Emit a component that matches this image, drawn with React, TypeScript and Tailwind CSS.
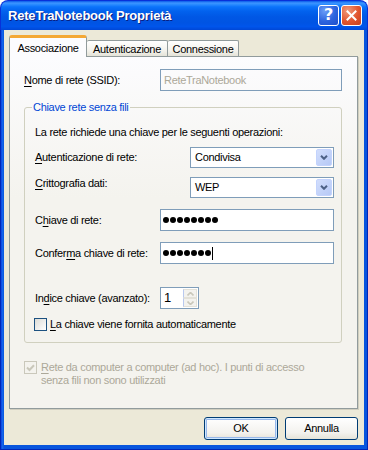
import React from "react";

function U({ children }: { children: React.ReactNode }) {
  return <span className="underline underline-offset-[2px] decoration-[1px]">{children}</span>;
}

function Chevron({ color = "#4D6185" }: { color?: string }) {
  return (
    <svg width="8" height="5" viewBox="0 0 8 5">
      <path d="M1 0.8 L4 3.8 L7 0.8" stroke={color} strokeWidth="2" fill="none" />
    </svg>
  );
}

function Select({ value }: { value: string }) {
  return (
    <div className="w-[144px] h-[21px] border border-[#7F9DB9] bg-white flex items-center pl-[4px] pr-px">
      <span className="flex-1 leading-[13px] text-black">{value}</span>
      <div className="w-[16px] h-[17px] rounded-[2px] border border-[#C3D3FD] bg-[linear-gradient(135deg,#D2DEFC,#B6C9F6)] flex items-center justify-center">
        <Chevron />
      </div>
    </div>
  );
}

function Dots({ n, caret }: { n: number; caret?: boolean }) {
  return (
    <div className="flex items-center gap-[1px]">
      {Array.from({ length: n }).map((_, i) => (
        <span key={i} className="w-[6px] h-[6px] rounded-full bg-black inline-block" />
      ))}
      {caret && <span className="w-px h-[13px] bg-black inline-block" />}
    </div>
  );
}

function Input({ w, children }: { w: string; children: React.ReactNode }) {
  return (
    <div className={`${w} h-[22px] border border-[#7F9DB9] bg-white flex items-center pl-[2px]`}>
      {children}
    </div>
  );
}

export default function App() {
  return (
    <div className="w-[368px] h-[450px] flex flex-col font-['Liberation_Sans',sans-serif] text-[11px] tracking-[-0.3px] text-black select-none">
      {/* Title bar */}
      <div className="h-[30px] rounded-t-[8px] flex items-center pl-[7px] pr-[5px] bg-[linear-gradient(to_bottom,#0A5AEA_0%,#3D95FF_7%,#2A8BFF_12%,#0C74FB_20%,#0262EE_35%,#0057E5_55%,#0054E3_75%,#0055EB_88%,#0047D6_100%)] border-t border-x border-[#0831D9]">
        <span className="text-white font-bold text-[13px] tracking-[-0.2px] [text-shadow:1px_1px_0_#0A1E80]">
          ReteTraNotebook Proprietà
        </span>
        <div className="ml-auto flex gap-[2px] pb-[1px]">
          <div className="w-[21px] h-[21px] rounded-[3px] border border-white bg-[radial-gradient(circle_at_30%_25%,#6A9EF8,#2C63DE_55%,#1E4FCB)] flex items-center justify-center">
            <span className="text-white font-bold text-[16px] leading-none font-['DejaVu_Sans',sans-serif]">?</span>
          </div>
          <div className="w-[21px] h-[21px] rounded-[3px] border border-white bg-[radial-gradient(circle_at_30%_25%,#F09A7C,#E1552F_55%,#C7401F)] flex items-center justify-center">
            <svg width="11" height="11" viewBox="0 0 11 11">
              <path d="M1.5 1.5 L9.5 9.5 M9.5 1.5 L1.5 9.5" stroke="white" strokeWidth="2" strokeLinecap="square" />
            </svg>
          </div>
        </div>
      </div>

      {/* Frame */}
      <div className="flex-1 flex bg-[linear-gradient(to_right,#0831D9,#166AEE_1px,#0855DD_3px,#0855DD)] px-[4px] pb-[4px] border-x border-b border-[#0027B8]">
        <div className="flex-1 bg-[#ECE9D8] flex flex-col -mx-px">
          {/* Tabs */}
          <div className="mt-[5px] h-[22px] flex items-end pl-[5px]">
            <div className="relative z-10 w-[78px] h-[22px] flex items-center justify-center bg-[#FCFCFE] border-x border-[#919B9C] rounded-t-[3px] border-t-[3px] border-t-[#F4A834] pt-[1px]">
              Associazione
            </div>
            <div className="w-[81px] h-[17px] flex items-center justify-center pt-px bg-[linear-gradient(to_bottom,#FFFFFF,#F3F2EC_60%,#E2E0D4)] border-t border-r border-[#919B9C] rounded-t-[2px]">
              Autenticazione
            </div>
            <div className="w-[71px] h-[17px] flex items-center justify-center pt-px bg-[linear-gradient(to_bottom,#FFFFFF,#F3F2EC_60%,#E2E0D4)] border-t border-r border-[#919B9C] rounded-t-[2px]">
              Connessione
            </div>
          </div>

          {/* Panel */}
          <div className="ml-[5px] w-[349px] h-[353px] -mt-px border border-[#919B9C] bg-[linear-gradient(to_bottom,#FCFCFE,#F4F3EE_40%,#F4F3EE)] shadow-[1px_1px_0_#D0CEBF] flex flex-col pl-[14px]">
            {/* Nome di rete */}
            <div className="mt-[12px] flex items-center">
              <span className="w-[136px] leading-[13px]">
                <U>N</U>ome di rete (SSID):
              </span>
              <div className="w-[182px] h-[22px] border border-[#7F9DB9] flex items-center pl-[3px] text-[#ACA899]">
                ReteTraNotebook
              </div>
            </div>

            {/* Group */}
            <fieldset className="mt-[10px] w-[318px] border border-[#D0D0BF] rounded-[3px] pl-[10px] pb-[11px]">
              <legend className="-ml-[3px] px-[1px] leading-[13px] text-[#0046D5]">Chiave rete senza fili</legend>
              <div className="mt-[12px] leading-[13px]">La rete richiede una chiave per le seguenti operazioni:</div>

              <div className="mt-[8px] flex items-start">
                <span className="w-[155px] mt-[4px] leading-[13px]">
                  <U>A</U>utenticazione di rete:
                </span>
                <Select value="Condivisa" />
              </div>

              <div className="mt-[9px] flex items-start">
                <span className="w-[155px] mt-0 leading-[13px]">
                  <U>C</U>rittografia dati:
                </span>
                <Select value="WEP" />
              </div>

              <div className="mt-[11px] flex items-center">
                <span className="w-[125px] leading-[13px]">
                  C<U>h</U>iave di rete:
                </span>
                <Input w="w-[174px]">
                  <Dots n={8} />
                </Input>
              </div>

              <div className="mt-[11px] flex items-center">
                <span className="w-[125px] leading-[13px]">
                  Confer<U>m</U>a chiave di rete:
                </span>
                <Input w="w-[174px]">
                  <Dots n={7} caret />
                </Input>
              </div>

              <div className="mt-[23px] flex items-center">
                <span className="w-[125px] leading-[13px]">
                  In<U>d</U>ice chiave (avanzato):
                </span>
                <div className="w-[39px] h-[22px] border border-[#7F9DB9] bg-white flex items-stretch">
                  <span className="flex-1 pl-[3px] text-[13px] leading-[20px]">1</span>
                  <div className="w-[15px] flex flex-col py-px pr-px">
                    <div className="flex-1 border border-[#E3E1D8] border-l-[#B9C9EF] bg-[#F3F2EE] flex items-center justify-center">
                      <svg width="7" height="4" viewBox="0 0 7 4"><path d="M0.5 3.5 L3.5 0.5 L6.5 3.5" stroke="#C9C7BA" strokeWidth="1.6" fill="none" /></svg>
                    </div>
                    <div className="flex-1 border border-[#E3E1D8] border-l-[#B9C9EF] bg-[#F3F2EE] flex items-center justify-center">
                      <svg width="7" height="4" viewBox="0 0 7 4"><path d="M0.5 0.5 L3.5 3.5 L6.5 0.5" stroke="#C9C7BA" strokeWidth="1.6" fill="none" /></svg>
                    </div>
                  </div>
                </div>
              </div>

              <div className="mt-[9px] flex items-center -ml-px">
                <span className="w-[13px] h-[13px] border border-[#1C5180] bg-[linear-gradient(135deg,#DCDCD7,#FFFFFF)] inline-block" />
                <span className="ml-[3px] leading-[13px]">
                  <U>L</U>a chiave viene fornita automaticamente
                </span>
              </div>
            </fieldset>

            {/* Ad hoc */}
            <div className="mt-[18px] flex items-start">
              <span className="w-[13px] h-[13px] border border-[#CAC8BB] bg-[#F4F3EE] flex items-center justify-center shrink-0">
                <svg width="9" height="8" viewBox="0 0 9 8">
                  <path d="M1 3.5 L3.5 6 L8 1.2" stroke="#C9C7BA" strokeWidth="2" fill="none" />
                </svg>
              </span>
              <span className="ml-[4px] leading-[13px] text-[#ACA899]">
                <U>R</U>ete da computer a computer (ad hoc). I punti di accesso
                <br />
                senza fili non sono utilizzati
              </span>
            </div>
          </div>

          {/* Buttons */}
          <div className="mt-[8px] flex justify-end gap-[7px] pr-[6px]">
            <div className="w-[74px] h-[23px] rounded-[3px] border border-[#003C74] bg-[linear-gradient(to_bottom,#FFFFFF,#F3F2EE_70%,#E5E3D8)] shadow-[inset_0_0_0_1px_#CEE7FF,inset_0_0_0_2px_#98B8EA] flex items-center justify-center">
              OK
            </div>
            <div className="w-[73px] h-[23px] rounded-[3px] border border-[#003C74] bg-[linear-gradient(to_bottom,#FFFFFF,#F3F2EE_70%,#E5E3D8)] flex items-center justify-center">
              Annulla
            </div>
          </div>
        </div>
      </div>
    </div>
  );
}
